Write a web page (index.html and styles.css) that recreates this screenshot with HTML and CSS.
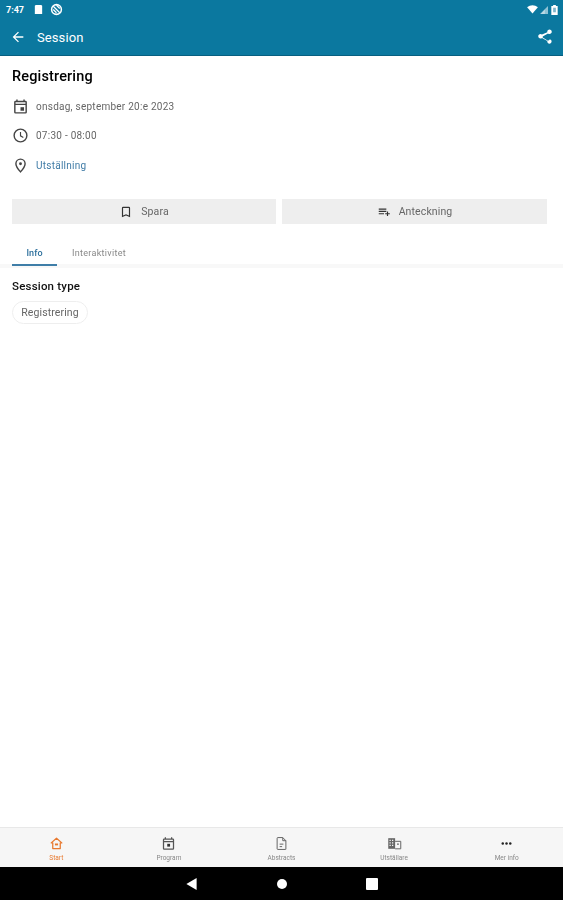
FILE: index.html
```html
<!DOCTYPE html>
<html lang="sv">
<head>
<meta charset="utf-8">
<title>Session</title>
<link rel="stylesheet" href="styles.css">
</head>
<body>
<div class="app">
  <header class="appbar">
    <div class="status">
      <div class="status-left">
        <span class="clock">7:47</span>
        <svg class="st-icon" viewBox="0 0 12 12"><path d="M3 1h6l1 1v9H2V2z" fill="#fff"/></svg>
        <svg class="st-icon st-icon-wide" viewBox="0 0 12 12"><circle cx="6" cy="6" r="4.5" fill="none" stroke="#fff" stroke-width="1.4"/><path d="M3 3l6 6M6 2l3 3M3 6l3 3" stroke="#fff" stroke-width="1.2"/></svg>
      </div>
      <div class="status-right">
        <svg class="st-wifi" viewBox="0 0 12 10"><path d="M0 2.500C3.500-.5 8.500-.5 12 2.500L6 9.500z" fill="#fff"/></svg>
        <svg class="st-signal" viewBox="0 0 10 10"><path d="M10 0v10H0z" fill="#fff" opacity=".55"/><path d="M6 4.500V10H1z" fill="#fff" opacity=".4"/></svg>
        <svg class="st-batt" viewBox="0 0 7 11"><path d="M2 0h3v1h2v10H0V1h2z" fill="#fff"/><rect x="2" y="3" width="3" height="5" fill="#7fb6cc"/></svg>
      </div>
    </div>
    <div class="toolbar">
      <svg class="tb-back" viewBox="0 0 24 24"><path d="M20 11H7.800l5.600-5.600L12 4l-8 8 8 8 1.400-1.400L7.800 13H20z" fill="#fff"/></svg>
      <span class="tb-title">Session</span>
      <svg class="tb-share" viewBox="0 0 24 24"><path d="M18 16.100c-.8 0-1.400.3-2 .8l-7.100-4.200c.1-.2.100-.5.100-.7s0-.5-.1-.7L16 7.200c.5.500 1.200.8 2 .8 1.700 0 3-1.300 3-3s-1.300-3-3-3-3 1.300-3 3c0 .2 0 .5.100.7L8 8.800C7.500 8.300 6.800 8 6 8c-1.700 0-3 1.300-3 3s1.300 3 3 3c.8 0 1.500-.3 2-.8l7.100 4.200c-.1.200-.1.400-.1.600 0 1.600 1.300 2.900 2.900 2.900s2.900-1.300 2.900-2.900-1.200-2.900-2.800-2.900z" fill="#fff"/></svg>
    </div>
  </header>

  <main class="content">
    <h1 class="title">Registrering</h1>
    <ul class="meta">
      <li class="meta-row">
        <svg class="meta-icon" viewBox="0 0 24 24"><path d="M19 4h-1V2h-2v2H8V2H6v2H5a2 2 0 0 0-2 2v14a2 2 0 0 0 2 2h14a2 2 0 0 0 2-2V6a2 2 0 0 0-2-2zm0 16H5V10h14zM5 8V6h14v2z" fill="#444"/><rect x="12" y="13" width="5" height="5" fill="#444"/></svg>
        <span>onsdag, september 20:e 2023</span>
      </li>
      <li class="meta-row">
        <svg class="meta-icon" viewBox="0 0 24 24"><circle cx="12" cy="12" r="9" fill="none" stroke="#444" stroke-width="2"/><path d="M12 7v5.500l4 2.400" fill="none" stroke="#444" stroke-width="1.600"/></svg>
        <span>07:30 - 08:00</span>
      </li>
      <li class="meta-row">
        <svg class="meta-icon" viewBox="0 0 24 24"><path d="M12 3a6.500 6.500 0 0 0-6.500 6.500C5.500 14 12 21 12 21s6.500-7 6.500-11.500A6.500 6.500 0 0 0 12 3z" fill="none" stroke="#444" stroke-width="2"/><circle cx="12" cy="9.500" r="2" fill="#444"/></svg>
        <span class="link">Utställning</span>
      </li>
    </ul>

    <div class="actions">
      <div class="action">
        <svg class="action-icon" viewBox="0 0 24 24"><path d="M17 3H7a2 2 0 0 0-2 2v16l7-3 7 3V5a2 2 0 0 0-2-2zm0 15-5-2.200L7 18V5h10z" fill="#333"/></svg>
        <span>Spara</span>
      </div>
      <div class="action">
        <svg class="action-icon" viewBox="0 0 24 24"><path d="M3 6h13v2H3zm0 4h13v2H3zm0 4h9v2H3zm14 0v-3h2v3h3v2h-3v3h-2v-3h-3v-2z" fill="#333"/></svg>
        <span>Anteckning</span>
      </div>
    </div>

    <nav class="tabs">
      <span class="tab tab-active">Info</span>
      <span class="tab">Interaktivitet</span>
    </nav>

    <h2 class="section-title">Session type</h2>
    <span class="chip">Registrering</span>
  </main>

  <nav class="bottom">
    <div class="bt bt-active">
      <svg class="bt-icon" viewBox="0 0 24 24"><path d="M12 3.500 3.500 11H6v9h12v-9h2.500z" fill="none" stroke="#e8792f" stroke-width="2" stroke-linejoin="round"/><rect x="9.500" y="12" width="5" height="3" fill="#e8792f"/></svg>
      <span>Start</span>
    </div>
    <div class="bt">
      <svg class="bt-icon" viewBox="0 0 24 24"><path d="M19 4h-1V2h-2v2H8V2H6v2H5a2 2 0 0 0-2 2v14a2 2 0 0 0 2 2h14a2 2 0 0 0 2-2V6a2 2 0 0 0-2-2zm0 16H5V10h14zM5 8V6h14v2z" fill="#555"/><rect x="10" y="12.500" width="4.500" height="4.500" fill="#333"/></svg>
      <span>Program</span>
    </div>
    <div class="bt">
      <svg class="bt-icon" viewBox="0 0 24 24"><path d="M6 2.500h8l5 5V21a.5.500 0 0 1-.5.500h-12.500a1 1 0 0 1-1-1V3.500a1 1 0 0 1 1-1zM14 2.500v5h5" fill="none" stroke="#666" stroke-width="1.600"/><path d="M9 13h6M9 17h4" stroke="#666" stroke-width="1.600"/></svg>
      <span>Abstracts</span>
    </div>
    <div class="bt">
      <svg class="bt-icon" viewBox="0 0 24 24"><path d="M2 3.500h11v17H2z" fill="#666"/><path d="M4 6h2v2H4zm4 0h2v2H8zM4 10h2v2H4zm4 0h2v2H8zM4 14h2v2H4zm4 0h2v2H8z" fill="#f6f6f6"/><path d="M13 8.500h9v12h-9" fill="none" stroke="#666" stroke-width="1.600"/><path d="M16 12h3v2h-3z" fill="#666"/></svg>
      <span>Utställare</span>
    </div>
    <div class="bt">
      <svg class="bt-icon" viewBox="0 0 24 24"><circle cx="6" cy="12" r="2" fill="#222"/><circle cx="12" cy="12" r="2" fill="#222"/><circle cx="18" cy="12" r="2" fill="#222"/></svg>
      <span>Mer info</span>
    </div>
  </nav>

  <footer class="sysnav">
    <svg class="sys-back" viewBox="0 0 12 14"><path d="M12 0v14L0 7z" fill="#fff"/></svg>
    <span class="sys-home"></span>
    <span class="sys-recent"></span>
  </footer>
</div>
</body>
</html>
```

FILE: styles.css
```css
* { box-sizing: border-box; }
html, body { margin: 0; padding: 0; }
body { font-family: Roboto, "Liberation Sans", sans-serif; background: #fff; }
svg { display: block; flex: none; }

.app { width: 563px; height: 900px; display: flex; flex-direction: column; overflow: hidden; filter: blur(.4px); }

.appbar { height: 56px; background: #0b789f; border-bottom: 1px solid #075f80; color: #fff; flex: none; }
.status { height: 19px; display: flex; justify-content: space-between; align-items: center; padding: 0 5px 0 6px; }
.status-left, .status-right { display: flex; align-items: center; }
.status-left { gap: 6px; }
.status-right { gap: 2px; }
.clock { font-size: 9px; font-weight: 700; line-height: 18px; width: 21px; }
.st-icon { width: 11px; height: 11px; }
.st-icon-wide { width: 13px; height: 13px; }
.st-wifi { width: 11px; height: 9px; }
.st-signal { width: 8px; height: 8px; }
.st-batt { width: 7px; height: 10px; margin-left: 1px; }

.toolbar { height: 36px; display: flex; align-items: center; padding: 0 9px 0 10px; }
.tb-back { width: 16px; height: 16px; }
.tb-title { font-size: 13px; font-weight: 400; margin-left: 11px; flex: 1; letter-spacing: .1px; }
.tb-share { width: 18px; height: 18px; }

.content { flex: 1; padding: 0 12px; }
.title { margin: 12px 0 0; font-size: 14.500px; line-height: 17px; font-weight: 500; color: #000; letter-spacing: .15px; }
.meta { list-style: none; margin: 6.500px 0 0; padding: 0; }
.meta-row { height: 29.500px; display: flex; align-items: center; gap: 7px; font-size: 10px; color: #666; letter-spacing: .25px; }
.meta-icon { width: 17px; height: 17px; }
.link { color: #3f7ba6; }

.actions { display: grid; grid-template-columns: 264px 265px; gap: 6px; margin-top: 19px; }
.action { height: 25px; background: #eee; display: flex; align-items: center; justify-content: center; gap: 8px; font-size: 10.500px; color: #666; letter-spacing: .12px; }
.action-icon { width: 14px; height: 14px; }

.tabs { display: flex; margin: 17px -12px 0; padding: 0 12px; border-bottom: 4px solid #f8f8f8; height: 27px; align-items: flex-start; }
.tab { font-size: 9px; color: #888; padding: 0 14px; line-height: 25px; height: 23px; letter-spacing: .3px; }
.tab-active { width: 45px; height: 25px; padding: 0; text-align: center; color: #2c6f9c; font-weight: 500; border-bottom: 2px solid #3f7ea8; margin-right: 1px; letter-spacing: .1px; }

.section-title { margin: 11px 0 0; font-size: 11.500px; line-height: 14px; font-weight: 500; color: #111; letter-spacing: .2px; }
.chip { display: inline-block; margin-top: 8px; height: 23px; width: 76px; border: 1px solid #eee; border-radius: 12px; font-size: 10.500px; line-height: 21px; text-align: center; color: #666; letter-spacing: .1px; }

.bottom { height: 40px; flex: none; background: #f6f6f6; border-top: 1px solid #e8e8e8; display: grid; grid-template-columns: repeat(5, 1fr); }
.bt { display: flex; flex-direction: column; align-items: center; padding-top: 8px; gap: 3px; font-size: 6.500px; line-height: 9px; color: #888; }
.bt-active { color: #e8792f; }
.bt-icon { width: 15px; height: 15px; }

.sysnav { height: 33px; flex: none; background: #000; display: flex; align-items: center; padding-left: 186px; }
.sys-back { width: 11px; height: 12px; }
.sys-home { width: 10px; height: 10px; border-radius: 50%; background: #fff; margin-left: 80px; }
.sys-recent { width: 12px; height: 12px; border-radius: 1px; background: #fff; margin-left: 79px; }
```
